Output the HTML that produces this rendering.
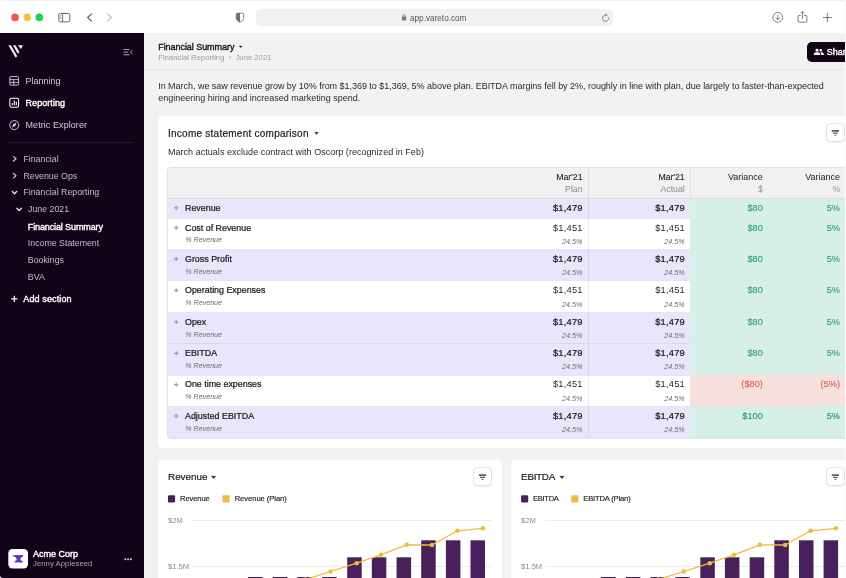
<!DOCTYPE html>
<html>
<head>
<meta charset="utf-8">
<title>Financial Summary</title>
<style>
*{box-sizing:border-box;margin:0;padding:0}
html,body{width:846px;height:578px;overflow:hidden;background:#fbfbfb}
body{font-family:"Liberation Sans",sans-serif;position:relative;color:#1c1c1e}
.t{position:absolute;white-space:nowrap;line-height:1}
svg{position:absolute;left:0;top:0;overflow:visible}
#win{position:absolute;left:0;top:0;width:845px;height:578px;overflow:hidden;background:#fff;border-top-left-radius:5px;filter:blur(0.55px)}
#chrome{position:absolute;left:0;top:0;width:845px;height:33px;background:#fff;border-top:1px solid #efeff1}
#url{position:absolute;left:255.5px;top:8.8px;width:357px;height:17.3px;border-radius:4.5px;background:#f1f1f1}
#side{position:absolute;left:0;top:33.3px;width:144px;height:544.7px;background:#110418;border-bottom-left-radius:3px}
#main{position:absolute;left:144px;top:33.3px;width:701px;height:544.7px;background:#f2f2f2}
#hdrline{position:absolute;left:144px;top:69px;width:701px;height:1px;background:#e4e4e4}
.card{position:absolute;background:#fff;border-radius:5px}
.fbtn{position:absolute;width:18.4px;height:19px;border:1px solid #e2e2e2;border-radius:4.5px;background:#fff;box-shadow:0 0.5px 1px rgba(0,0,0,.06)}
.band{position:absolute}
</style>
</head>
<body>
<div id="win">
<div id="chrome"></div>
<div id="url"></div>
<div id="side"></div>
<div id="main"></div>
<div id="hdrline"></div>

<svg width="846" height="34" viewBox="0 0 846 34">
<circle cx="15" cy="17.4" r="3.8" fill="#f65353"/>
<circle cx="27.3" cy="17.4" r="3.8" fill="#f4c53a"/>
<circle cx="39.3" cy="17.4" r="3.8" fill="#1fd449"/>
<rect x="58.8" y="13.4" width="11" height="8.4" rx="1.5" fill="none" stroke="#636363" stroke-width="1"/>
<path d="M62.6 13.4V21.8" stroke="#636363" stroke-width="0.95"/>
<path d="M60.1 15.6h1.3M60.1 17h1.3M60.1 18.4h1.3" stroke="#6b6b6b" stroke-width="0.6"/>
<path d="M91.6 13.9L87.6 17.5L91.6 21.1" fill="none" stroke="#5a5a5a" stroke-width="1.1" stroke-linecap="round" stroke-linejoin="round"/>
<path d="M107.4 13.9L111.4 17.5L107.4 21.1" fill="none" stroke="#bdbdbd" stroke-width="1.1" stroke-linecap="round" stroke-linejoin="round"/>
<path d="M236.3 13.7Q240 12.2 243.7 13.7V18.3Q243.7 20.7 240 22.3Q236.3 20.7 236.3 18.3Z" fill="none" stroke="#777" stroke-width="0.85" stroke-linejoin="round"/>
<path d="M240 12.9V22.3Q236.3 20.7 236.3 18.3V13.7Q238 13 240 12.9Z" fill="#6f6f6f"/>
<rect x="401.9" y="16.6" width="4.4" height="3.9" rx="0.7" fill="#7a7a7a"/>
<path d="M402.9 16.8V15.7a1.2 1.2 0 0 1 2.4 0V16.8" fill="none" stroke="#7a7a7a" stroke-width="0.8"/>
<path d="M608.75 17.5A3.2 3.2 0 1 1 605.6 15.0" fill="none" stroke="#707070" stroke-width="0.8" stroke-linecap="round"/>
<path d="M605.5 13.5L607.5 15.0L605.5 16.4Z" fill="#707070"/>
<circle cx="777.8" cy="17.3" r="4.9" fill="none" stroke="#6b6b6b" stroke-width="0.85"/>
<path d="M777.8 14.8V19.6M775.9 17.9L777.8 19.7L779.7 17.9" fill="none" stroke="#6b6b6b" stroke-width="0.85" stroke-linecap="round" stroke-linejoin="round"/>
<path d="M800.6 15.4H798.9a0.8 0.8 0 0 0-.8.8V21.4a0.8 0.8 0 0 0 .8.8H806.1a0.8 0.8 0 0 0 .8-.8V16.2a0.8 0.8 0 0 0-.8-.8H804.4" fill="none" stroke="#6b6b6b" stroke-width="0.85" stroke-linecap="round"/>
<path d="M802.5 18.6V11.4M800.7 13.1L802.5 11.3L804.3 13.1" fill="none" stroke="#6b6b6b" stroke-width="0.85" stroke-linecap="round" stroke-linejoin="round"/>
<path d="M823.2 17.5H831.6M827.4 13.3V21.7" stroke="#6b6b6b" stroke-width="0.9" stroke-linecap="round"/>
</svg>
<div class="t" style="top:15px;font-size:8.2px;left:410.00px;color:#555;">app.vareto.com</div>
<svg width="144" height="578" viewBox="0 0 144 578">
<polygon points="8.3,45.3 10.9,45.3 17.2,56.2 15.7,57.8" fill="#f4f2f5"/>
<polygon points="12.9,45.3 15.5,45.3 19.3,51.9 18.0,54.0" fill="#f4f2f5"/>
<polygon points="17.7,45.3 22.9,45.3 21.0,49.1" fill="#f4f2f5"/>
<path d="M123.5 49.6H129.6M123.5 52.2H128.2M123.5 54.8H129.6" stroke="#cfc9d3" stroke-width="0.8"/>
<path d="M132.6 50.3L130.5 52.2L132.6 54.1" fill="none" stroke="#cfc9d3" stroke-width="0.8"/>
<rect x="9.8" y="76.6" width="8.8" height="8.5" rx="1.2" fill="none" stroke="#d3ced7" stroke-width="0.95"/>
<path d="M9.8 79.6H18.6M9.8 82.4H18.6M13.7 79.6V85.1" stroke="#d3ced7" stroke-width="0.85"/>
<rect x="9.8" y="98.3" width="8.8" height="8.9" rx="1.6" fill="none" stroke="#fff" stroke-width="1.05"/>
<path d="M12.3 105.3V103M14.3 105.3V100.5M16.3 105.3V101.7" stroke="#fff" stroke-width="1.1"/>
<circle cx="14.3" cy="125.1" r="4.5" fill="none" stroke="#d3ced7" stroke-width="0.95"/>
<polygon points="16.6,122.8 15.3,126.1 12.0,127.4 13.3,124.1" fill="#d3ced7"/>
<rect x="8.3" y="142" width="125.7" height="0.8" fill="#2c2033"/>
<path d="M13.5 156.60000000000002L16.0 158.8L13.5 161.0" fill="none" stroke="#d3ced7" stroke-width="1.2" stroke-linecap="round" stroke-linejoin="round"/>
<path d="M13.5 173.5L16.0 175.7L13.5 177.89999999999998" fill="none" stroke="#d3ced7" stroke-width="1.2" stroke-linecap="round" stroke-linejoin="round"/>
<path d="M12.2 191.4L14.5 193.79999999999998L16.8 191.4" fill="none" stroke="#f0eef2" stroke-width="1.3" stroke-linecap="round" stroke-linejoin="round"/>
<path d="M16.9 208.20000000000002L19.2 210.6L21.5 208.20000000000002" fill="none" stroke="#f0eef2" stroke-width="1.3" stroke-linecap="round" stroke-linejoin="round"/>
<path d="M11.2 298.9H17.4M14.3 295.8V302" stroke="#fff" stroke-width="1.25"/>
<rect x="8.3" y="549" width="19.7" height="19.5" rx="4.2" fill="#fff"/>
<path d="M12.7 555.2H15.2V555H23.2V556.6C21.6 556.9 20.6 557.9 20.4 559.2C20.6 560.2 21.6 560.9 22.6 561V562.4H14.6V561C15.7 560.8 16.6 560.2 16.7 559.2C16.4 557.7 14.6 556.5 12.7 556.3Z" fill="#5a3db8"/>
<circle cx="125.3" cy="559.2" r="0.95" fill="#e2dee5"/>
<circle cx="128.1" cy="559.2" r="0.95" fill="#e2dee5"/>
<circle cx="130.9" cy="559.2" r="0.95" fill="#e2dee5"/>
</svg>
<div class="t" style="top:77px;font-size:9px;left:25.50px;color:#d3ced7;">Planning</div>
<div class="t" style="top:99px;font-size:9px;left:25.50px;color:#fff;letter-spacing:0.07px;-webkit-text-stroke:0.36px;">Reporting</div>
<div class="t" style="top:121px;font-size:9px;left:25.50px;color:#d3ced7;letter-spacing:0.07px;">Metric Explorer</div>
<div class="t" style="top:155px;font-size:8.8px;left:23.40px;color:#c2bdc7;">Financial</div>
<div class="t" style="top:172px;font-size:8.8px;left:23.40px;color:#c2bdc7;">Revenue Ops</div>
<div class="t" style="top:188px;font-size:8.8px;left:23.40px;color:#c2bdc7;">Financial Reporting</div>
<div class="t" style="top:205px;font-size:8.8px;left:28.00px;color:#c2bdc7;">June 2021</div>
<div class="t" style="top:223px;font-size:9px;left:27.80px;color:#fff;letter-spacing:-0.12px;-webkit-text-stroke:0.36px;">Financial Summary</div>
<div class="t" style="top:239px;font-size:8.8px;left:27.80px;color:#c2bdc7;">Income Statement</div>
<div class="t" style="top:256px;font-size:8.8px;left:27.80px;color:#c2bdc7;">Bookings</div>
<div class="t" style="top:273px;font-size:8.8px;left:27.80px;color:#c2bdc7;">BVA</div>
<div class="t" style="top:295px;font-size:9px;left:23.30px;color:#fff;letter-spacing:0.12px;-webkit-text-stroke:0.36px;">Add section</div>
<div class="t" style="top:550px;font-size:9px;left:33.00px;color:#fff;-webkit-text-stroke:0.36px;">Acme Corp</div>
<div class="t" style="top:560px;font-size:7.8px;left:33.00px;color:#a9a2ae;">Jenny Appleseed</div>
<div class="t" style="top:43px;font-size:9px;left:158.20px;color:#141416;letter-spacing:-0.05px;-webkit-text-stroke:0.36px;">Financial Summary</div>
<svg width="846" height="100"><path d="M239 45.9h3.2l-1.6 1.8z" fill="#222" stroke="#222" stroke-width="0.3" stroke-linejoin="round"/></svg>
<div class="t" style="top:54px;font-size:7.7px;left:158.20px;color:#9a9a9a;">Financial Reporting&nbsp; ›&nbsp; June 2021</div>
<div style="position:absolute;left:807.1px;top:42px;width:50px;height:19.6px;border-radius:4.8px;background:#0f0514"></div>
<svg width="846" height="100"><circle cx="817" cy="50.3" r="1.45" fill="#fff"/><path d="M813.9 54.9V53.9C813.9 52.7 815.4 52.3 817 52.3S820.1 52.7 820.1 53.9V54.9Z" fill="#fff"/><circle cx="820.8" cy="50.3" r="1.3" fill="#fff"/><path d="M820.9 52.3C822.4 52.3 823.8 52.8 823.8 53.9V54.9H821V53.8C821 53.2 820.7 52.7 820.3 52.4Z" fill="#fff"/></svg>
<div class="t" style="top:48px;font-size:9px;left:826.70px;color:#fff;-webkit-text-stroke:0.36px;">Share</div>
<div class="t" style="top:82px;font-size:9px;left:158.20px;color:#2a2a2c;letter-spacing:-0.029px;">In March, we saw revenue grow by 10% from $1,369 to $1,369, 5% above plan. EBITDA margins fell by 2%, roughly in line with plan, due largely to faster-than-expected</div>
<div class="t" style="top:94px;font-size:9px;left:158.20px;color:#2a2a2c;">engineering hiring and increased marketing spend.</div>
<div class="card" style="left:158.2px;top:115.8px;width:700px;height:332.3px"></div>
<div class="t" style="top:129px;font-size:10px;left:168.00px;color:#1a1a1c;letter-spacing:0.25px;-webkit-text-stroke:0.2px #1a1a1c;">Income statement comparison</div>
<svg width="846" height="200"><path d="M314.6 132.3h3.8l-1.9 2.1z" fill="#222" stroke="#222" stroke-width="0.3" stroke-linejoin="round"/></svg>
<div class="t" style="top:148px;font-size:9px;left:168.00px;color:#2a2a2c;letter-spacing:0.03px;">March actuals exclude contract with Oscorp (recognized in Feb)</div>
<div class="fbtn" style="left:826.2px;top:123.4px"></div>

<div style="position:absolute;left:167.3px;top:166.8px;width:700px;height:272.00px;border:1px solid #e2e2e4;border-radius:3.5px;overflow:hidden;background:#fff">
<div class="band" style="left:-1.00px;top:-1.00px;width:732.70px;height:31.40px;background:#f1f1f1"></div>
<div class="band" style="left:-1.00px;top:30.40px;width:522.70px;height:19.80px;background:#e9e6fb"></div>
<div class="band" style="left:521.70px;top:30.40px;width:210.00px;height:19.80px;background:#d6efe7"></div>
<div class="band" style="left:521.70px;top:50.20px;width:210.00px;height:31.30px;background:#d6efe7"></div>
<div class="band" style="left:-1.00px;top:81.50px;width:522.70px;height:31.50px;background:#e9e6fb"></div>
<div class="band" style="left:521.70px;top:81.50px;width:210.00px;height:31.50px;background:#d6efe7"></div>
<div class="band" style="left:521.70px;top:113.00px;width:210.00px;height:31.50px;background:#d6efe7"></div>
<div class="band" style="left:-1.00px;top:144.50px;width:522.70px;height:31.30px;background:#e9e6fb"></div>
<div class="band" style="left:521.70px;top:144.50px;width:210.00px;height:31.30px;background:#d6efe7"></div>
<div class="band" style="left:-1.00px;top:175.80px;width:522.70px;height:31.40px;background:#e9e6fb"></div>
<div class="band" style="left:521.70px;top:175.80px;width:210.00px;height:31.40px;background:#d6efe7"></div>
<div class="band" style="left:521.70px;top:207.20px;width:210.00px;height:31.30px;background:#f8e0dd"></div>
<div class="band" style="left:-1.00px;top:238.50px;width:522.70px;height:32.10px;background:#e9e6fb"></div>
<div class="band" style="left:521.70px;top:238.50px;width:210.00px;height:32.10px;background:#d6efe7"></div>
<div class="band" style="left:-1.00px;top:30.00px;width:732.70px;height:0.80px;background:#dedee0"></div>
<div class="band" style="left:-1.00px;top:49.85px;width:522.70px;height:0.70px;background:#e6e3f3"></div>
<div class="band" style="left:-1.00px;top:81.15px;width:522.70px;height:0.70px;background:#e6e3f3"></div>
<div class="band" style="left:-1.00px;top:112.65px;width:522.70px;height:0.70px;background:#e6e3f3"></div>
<div class="band" style="left:-1.00px;top:144.15px;width:522.70px;height:0.70px;background:#e6e3f3"></div>
<div class="band" style="left:-1.00px;top:175.45px;width:522.70px;height:0.70px;background:#dad6ee"></div>
<div class="band" style="left:-1.00px;top:206.85px;width:522.70px;height:0.70px;background:#e6e3f3"></div>
<div class="band" style="left:-1.00px;top:238.15px;width:522.70px;height:0.70px;background:#e6e3f3"></div>
<div class="band" style="left:419.70px;top:-1.00px;width:0.80px;height:271.60px;background:rgba(110,110,140,0.12)"></div>
<div class="band" style="left:521.30px;top:-1.00px;width:0.80px;height:31.40px;background:rgba(110,110,140,0.12)"></div>
</div>
<div class="t" style="top:173px;font-size:8.7px;right:262.50px;color:#1c1c1e;-webkit-text-stroke:0.08px #1c1c1e;">Mar'21</div>
<div class="t" style="top:185px;font-size:8.7px;right:262.50px;color:#8c8c8e;">Plan</div>
<div class="t" style="top:173px;font-size:8.7px;right:160.30px;color:#1c1c1e;-webkit-text-stroke:0.08px #1c1c1e;">Mar'21</div>
<div class="t" style="top:185px;font-size:8.7px;right:160.30px;color:#8c8c8e;">Actual</div>
<div class="t" style="top:173px;font-size:9px;right:82.20px;color:#1c1c1e;">Variance</div>
<div class="t" style="top:185px;font-size:8.5px;right:82.20px;color:#8c8c8e;">$</div>
<div class="t" style="top:173px;font-size:9px;right:5.00px;color:#1c1c1e;">Variance</div>
<div class="t" style="top:185px;font-size:8.5px;right:5.00px;color:#8c8c8e;">%</div>
<svg width="846" height="578">
<path d="M174.0 207.89999999999998h4.4M176.2 205.7v4.4" stroke="#85858c" stroke-width="0.9"/>
<path d="M174.0 227.7h4.4M176.2 225.5v4.4" stroke="#85858c" stroke-width="0.9"/>
<path d="M174.0 259.0h4.4M176.2 256.8v4.4" stroke="#85858c" stroke-width="0.9"/>
<path d="M174.0 290.5h4.4M176.2 288.3v4.4" stroke="#85858c" stroke-width="0.9"/>
<path d="M174.0 322.0h4.4M176.2 319.8v4.4" stroke="#85858c" stroke-width="0.9"/>
<path d="M174.0 353.3h4.4M176.2 351.1v4.4" stroke="#85858c" stroke-width="0.9"/>
<path d="M174.0 384.7h4.4M176.2 382.5v4.4" stroke="#85858c" stroke-width="0.9"/>
<path d="M174.0 416.0h4.4M176.2 413.8v4.4" stroke="#85858c" stroke-width="0.9"/>
</svg>
<div class="t" style="top:204px;font-size:8.9px;left:185.00px;color:#1a1a1c;letter-spacing:0.0px;-webkit-text-stroke:0.24px #1a1a1c;">Revenue</div>
<div class="t" style="top:204px;font-size:9.3px;right:262.28px;color:#1a1a1c;letter-spacing:0.22px;-webkit-text-stroke:0.24px;">$1,479</div>
<div class="t" style="top:204px;font-size:9.3px;right:160.08px;color:#1a1a1c;letter-spacing:0.22px;-webkit-text-stroke:0.24px;">$1,479</div>
<div class="t" style="top:204px;font-size:9.2px;right:82.20px;color:#2f9e78;font-weight:400;-webkit-text-stroke:0.1px #2f9e78;">$80</div>
<div class="t" style="top:204px;font-size:9.2px;right:5.00px;color:#2f9e78;font-weight:400;-webkit-text-stroke:0.1px #2f9e78;">5%</div>
<div class="t" style="top:224px;font-size:8.9px;left:185.00px;color:#1a1a1c;letter-spacing:0.0px;-webkit-text-stroke:0.24px #1a1a1c;">Cost of Revenue</div>
<div class="t" style="top:224px;font-size:9.3px;right:262.28px;color:#2a2a2c;letter-spacing:0.22px;">$1,451</div>
<div class="t" style="top:224px;font-size:9.3px;right:160.08px;color:#2a2a2c;letter-spacing:0.22px;">$1,451</div>
<div class="t" style="top:237px;font-size:7.1px;left:185.30px;color:#6a6a6e;font-style:italic;">% Revenue</div>
<div class="t" style="top:238px;font-size:7.2px;right:262.50px;color:#6a6a6e;font-style:italic;">24.5%</div>
<div class="t" style="top:238px;font-size:7.2px;right:160.30px;color:#6a6a6e;font-style:italic;">24.5%</div>
<div class="t" style="top:224px;font-size:9.2px;right:82.20px;color:#2f9e78;font-weight:400;-webkit-text-stroke:0.1px #2f9e78;">$80</div>
<div class="t" style="top:224px;font-size:9.2px;right:5.00px;color:#2f9e78;font-weight:400;-webkit-text-stroke:0.1px #2f9e78;">5%</div>
<div class="t" style="top:255px;font-size:8.9px;left:185.00px;color:#1a1a1c;letter-spacing:0.0px;-webkit-text-stroke:0.24px #1a1a1c;">Gross Profit</div>
<div class="t" style="top:255px;font-size:9.3px;right:262.28px;color:#1a1a1c;letter-spacing:0.22px;-webkit-text-stroke:0.24px;">$1,479</div>
<div class="t" style="top:255px;font-size:9.3px;right:160.08px;color:#1a1a1c;letter-spacing:0.22px;-webkit-text-stroke:0.24px;">$1,479</div>
<div class="t" style="top:269px;font-size:7.1px;left:185.30px;color:#6a6a6e;font-style:italic;">% Revenue</div>
<div class="t" style="top:269px;font-size:7.2px;right:262.50px;color:#6a6a6e;font-style:italic;">24.5%</div>
<div class="t" style="top:269px;font-size:7.2px;right:160.30px;color:#6a6a6e;font-style:italic;">24.5%</div>
<div class="t" style="top:255px;font-size:9.2px;right:82.20px;color:#2f9e78;font-weight:400;-webkit-text-stroke:0.1px #2f9e78;">$80</div>
<div class="t" style="top:255px;font-size:9.2px;right:5.00px;color:#2f9e78;font-weight:400;-webkit-text-stroke:0.1px #2f9e78;">5%</div>
<div class="t" style="top:286px;font-size:8.9px;left:185.00px;color:#1a1a1c;letter-spacing:0.0px;-webkit-text-stroke:0.24px #1a1a1c;">Operating Expenses</div>
<div class="t" style="top:286px;font-size:9.3px;right:262.28px;color:#2a2a2c;letter-spacing:0.22px;">$1,451</div>
<div class="t" style="top:286px;font-size:9.3px;right:160.08px;color:#2a2a2c;letter-spacing:0.22px;">$1,451</div>
<div class="t" style="top:300px;font-size:7.1px;left:185.30px;color:#6a6a6e;font-style:italic;">% Revenue</div>
<div class="t" style="top:301px;font-size:7.2px;right:262.50px;color:#6a6a6e;font-style:italic;">24.5%</div>
<div class="t" style="top:301px;font-size:7.2px;right:160.30px;color:#6a6a6e;font-style:italic;">24.5%</div>
<div class="t" style="top:286px;font-size:9.2px;right:82.20px;color:#2f9e78;font-weight:400;-webkit-text-stroke:0.1px #2f9e78;">$80</div>
<div class="t" style="top:286px;font-size:9.2px;right:5.00px;color:#2f9e78;font-weight:400;-webkit-text-stroke:0.1px #2f9e78;">5%</div>
<div class="t" style="top:318px;font-size:8.9px;left:185.00px;color:#1a1a1c;letter-spacing:0.0px;-webkit-text-stroke:0.24px #1a1a1c;">Opex</div>
<div class="t" style="top:318px;font-size:9.3px;right:262.28px;color:#1a1a1c;letter-spacing:0.22px;-webkit-text-stroke:0.24px;">$1,479</div>
<div class="t" style="top:318px;font-size:9.3px;right:160.08px;color:#1a1a1c;letter-spacing:0.22px;-webkit-text-stroke:0.24px;">$1,479</div>
<div class="t" style="top:332px;font-size:7.1px;left:185.30px;color:#6a6a6e;font-style:italic;">% Revenue</div>
<div class="t" style="top:332px;font-size:7.2px;right:262.50px;color:#6a6a6e;font-style:italic;">24.5%</div>
<div class="t" style="top:332px;font-size:7.2px;right:160.30px;color:#6a6a6e;font-style:italic;">24.5%</div>
<div class="t" style="top:318px;font-size:9.2px;right:82.20px;color:#2f9e78;font-weight:400;-webkit-text-stroke:0.1px #2f9e78;">$80</div>
<div class="t" style="top:318px;font-size:9.2px;right:5.00px;color:#2f9e78;font-weight:400;-webkit-text-stroke:0.1px #2f9e78;">5%</div>
<div class="t" style="top:349px;font-size:8.9px;left:185.00px;color:#1a1a1c;letter-spacing:0.0px;-webkit-text-stroke:0.24px #1a1a1c;">EBITDA</div>
<div class="t" style="top:349px;font-size:9.3px;right:262.28px;color:#1a1a1c;letter-spacing:0.22px;-webkit-text-stroke:0.24px;">$1,479</div>
<div class="t" style="top:349px;font-size:9.3px;right:160.08px;color:#1a1a1c;letter-spacing:0.22px;-webkit-text-stroke:0.24px;">$1,479</div>
<div class="t" style="top:363px;font-size:7.1px;left:185.30px;color:#6a6a6e;font-style:italic;">% Revenue</div>
<div class="t" style="top:363px;font-size:7.2px;right:262.50px;color:#6a6a6e;font-style:italic;">24.5%</div>
<div class="t" style="top:363px;font-size:7.2px;right:160.30px;color:#6a6a6e;font-style:italic;">24.5%</div>
<div class="t" style="top:349px;font-size:9.2px;right:82.20px;color:#2f9e78;font-weight:400;-webkit-text-stroke:0.1px #2f9e78;">$80</div>
<div class="t" style="top:349px;font-size:9.2px;right:5.00px;color:#2f9e78;font-weight:400;-webkit-text-stroke:0.1px #2f9e78;">5%</div>
<div class="t" style="top:380px;font-size:8.9px;left:185.00px;color:#1a1a1c;letter-spacing:0.0px;-webkit-text-stroke:0.24px #1a1a1c;">One time expenses</div>
<div class="t" style="top:380px;font-size:9.3px;right:262.28px;color:#2a2a2c;letter-spacing:0.22px;">$1,451</div>
<div class="t" style="top:380px;font-size:9.3px;right:160.08px;color:#2a2a2c;letter-spacing:0.22px;">$1,451</div>
<div class="t" style="top:394px;font-size:7.1px;left:185.30px;color:#6a6a6e;font-style:italic;">% Revenue</div>
<div class="t" style="top:395px;font-size:7.2px;right:262.50px;color:#6a6a6e;font-style:italic;">24.5%</div>
<div class="t" style="top:395px;font-size:7.2px;right:160.30px;color:#6a6a6e;font-style:italic;">24.5%</div>
<div class="t" style="top:380px;font-size:9.2px;right:82.20px;color:#d9604c;font-weight:400;-webkit-text-stroke:0.1px #d9604c;">($80)</div>
<div class="t" style="top:380px;font-size:9.2px;right:5.00px;color:#d9604c;font-weight:400;-webkit-text-stroke:0.1px #d9604c;">(5%)</div>
<div class="t" style="top:412px;font-size:8.9px;left:185.00px;color:#1a1a1c;letter-spacing:0.0px;-webkit-text-stroke:0.24px #1a1a1c;">Adjusted EBITDA</div>
<div class="t" style="top:412px;font-size:9.3px;right:262.28px;color:#1a1a1c;letter-spacing:0.22px;-webkit-text-stroke:0.24px;">$1,479</div>
<div class="t" style="top:412px;font-size:9.3px;right:160.08px;color:#1a1a1c;letter-spacing:0.22px;-webkit-text-stroke:0.24px;">$1,479</div>
<div class="t" style="top:426px;font-size:7.1px;left:185.30px;color:#6a6a6e;font-style:italic;">% Revenue</div>
<div class="t" style="top:426px;font-size:7.2px;right:262.50px;color:#6a6a6e;font-style:italic;">24.5%</div>
<div class="t" style="top:426px;font-size:7.2px;right:160.30px;color:#6a6a6e;font-style:italic;">24.5%</div>
<div class="t" style="top:412px;font-size:9.2px;right:82.20px;color:#2f9e78;font-weight:400;-webkit-text-stroke:0.2px;">$100</div>
<div class="t" style="top:412px;font-size:9.2px;right:5.00px;color:#2f9e78;font-weight:400;-webkit-text-stroke:0.2px;">5%</div>
<div class="card" style="left:158.10px;top:460px;width:343.6px;height:140px"></div>
<div class="t" style="top:472px;font-size:9.9px;left:168.00px;color:#1a1a1c;letter-spacing:0px;-webkit-text-stroke:0.2px #1a1a1c;">Revenue</div>
<div class="t" style="top:495px;font-size:7.6px;left:180.00px;color:#1c1c1e;letter-spacing:-0.1px;-webkit-text-stroke:0.15px #1c1c1e;">Revenue</div>
<div class="t" style="top:495px;font-size:7.6px;left:234.70px;color:#1c1c1e;letter-spacing:-0.05px;-webkit-text-stroke:0.15px #1c1c1e;">Revenue (Plan)</div>
<div class="t" style="top:517px;font-size:7.6px;left:168.00px;color:#8a8a8c;">$2M</div>
<div class="t" style="top:563px;font-size:7.6px;left:168.00px;color:#8a8a8c;">$1.5M</div>
<svg width="846" height="578" viewBox="0 0 846 578">
<path d="M211.3 476.2h4.4l-2.2 2.4z" fill="#222" stroke="#222" stroke-width="0.4" stroke-linejoin="round"/>
<rect x="168.00" y="495.2" width="7.1" height="7.3" rx="1.2" fill="#48215c"/>
<rect x="222.50" y="495.2" width="7.1" height="7.3" rx="1.2" fill="#eebb3d"/>
<rect x="192.20" y="520.2" width="299.80" height="0.8" fill="#e6e6e8"/>
<rect x="192.20" y="566.0" width="299.80" height="0.8" fill="#e6e6e8"/>
<rect x="248.00" y="577" width="14.5" height="23" fill="#48215c"/>
<rect x="272.80" y="577" width="14.5" height="23" fill="#48215c"/>
<rect x="297.40" y="577" width="14.5" height="23" fill="#48215c"/>
<rect x="322.20" y="577" width="14.5" height="23" fill="#48215c"/>
<rect x="347.20" y="557.3" width="14.5" height="42.700000000000045" fill="#48215c"/>
<rect x="371.80" y="557.3" width="14.5" height="42.700000000000045" fill="#48215c"/>
<rect x="396.60" y="557.3" width="14.5" height="42.700000000000045" fill="#48215c"/>
<rect x="421.20" y="540.3" width="14.5" height="59.700000000000045" fill="#48215c"/>
<rect x="445.90" y="540.3" width="14.5" height="59.700000000000045" fill="#48215c"/>
<rect x="470.50" y="540.3" width="14.5" height="59.700000000000045" fill="#48215c"/>
<polyline fill="none" stroke="#eebb3d" stroke-width="1.3" stroke-linejoin="round" points="254.50,592 279.80,588 305.10,579.6 330.50,571.5 356.70,563.2 380.80,554.8 406.70,544.8 432.00,545 457.50,530.8 482.80,528.3"/>
<circle cx="254.50" cy="592" r="2.3" fill="#eebb3d"/>
<circle cx="279.80" cy="588" r="2.3" fill="#eebb3d"/>
<circle cx="305.10" cy="579.6" r="2.3" fill="#eebb3d"/>
<circle cx="330.50" cy="571.5" r="2.3" fill="#eebb3d"/>
<circle cx="356.70" cy="563.2" r="2.3" fill="#eebb3d"/>
<circle cx="380.80" cy="554.8" r="2.3" fill="#eebb3d"/>
<circle cx="406.70" cy="544.8" r="2.3" fill="#eebb3d"/>
<circle cx="432.00" cy="545" r="2.3" fill="#eebb3d"/>
<circle cx="457.50" cy="530.8" r="2.3" fill="#eebb3d"/>
<circle cx="482.80" cy="528.3" r="2.3" fill="#eebb3d"/>
</svg>
<div class="card" style="left:511.20px;top:460px;width:400px;height:140px"></div>
<div class="t" style="top:472px;font-size:9.9px;left:521.10px;color:#1a1a1c;letter-spacing:-0.3px;-webkit-text-stroke:0.2px #1a1a1c;">EBITDA</div>
<div class="t" style="top:495px;font-size:7.6px;left:533.10px;color:#1c1c1e;letter-spacing:-0.33px;-webkit-text-stroke:0.15px #1c1c1e;">EBITDA</div>
<div class="t" style="top:495px;font-size:7.6px;left:583.30px;color:#1c1c1e;letter-spacing:-0.165px;-webkit-text-stroke:0.15px #1c1c1e;">EBITDA (Plan)</div>
<div class="t" style="top:517px;font-size:7.6px;left:521.10px;color:#8a8a8c;">$2M</div>
<div class="t" style="top:563px;font-size:7.6px;left:521.10px;color:#8a8a8c;">$1.5M</div>
<svg width="846" height="578" viewBox="0 0 846 578">
<path d="M559.8 476.2h4.4l-2.2 2.4z" fill="#222" stroke="#222" stroke-width="0.4" stroke-linejoin="round"/>
<rect x="521.10" y="495.2" width="7.1" height="7.3" rx="1.2" fill="#48215c"/>
<rect x="571.30" y="495.2" width="7.1" height="7.3" rx="1.2" fill="#eebb3d"/>
<rect x="545.30" y="520.2" width="354.70" height="0.8" fill="#e6e6e8"/>
<rect x="545.30" y="566.0" width="354.70" height="0.8" fill="#e6e6e8"/>
<rect x="601.10" y="577" width="14.5" height="23" fill="#48215c"/>
<rect x="625.90" y="577" width="14.5" height="23" fill="#48215c"/>
<rect x="650.50" y="577" width="14.5" height="23" fill="#48215c"/>
<rect x="675.30" y="577" width="14.5" height="23" fill="#48215c"/>
<rect x="700.30" y="557.3" width="14.5" height="42.700000000000045" fill="#48215c"/>
<rect x="724.90" y="557.3" width="14.5" height="42.700000000000045" fill="#48215c"/>
<rect x="749.70" y="557.3" width="14.5" height="42.700000000000045" fill="#48215c"/>
<rect x="774.30" y="540.3" width="14.5" height="59.700000000000045" fill="#48215c"/>
<rect x="799.00" y="540.3" width="14.5" height="59.700000000000045" fill="#48215c"/>
<rect x="823.60" y="540.3" width="14.5" height="59.700000000000045" fill="#48215c"/>
<polyline fill="none" stroke="#eebb3d" stroke-width="1.3" stroke-linejoin="round" points="607.60,592 632.90,588 658.20,579.6 683.60,571.5 709.80,563.2 733.90,554.8 759.80,544.8 785.10,545 810.60,530.8 835.90,528.3"/>
<circle cx="607.60" cy="592" r="2.3" fill="#eebb3d"/>
<circle cx="632.90" cy="588" r="2.3" fill="#eebb3d"/>
<circle cx="658.20" cy="579.6" r="2.3" fill="#eebb3d"/>
<circle cx="683.60" cy="571.5" r="2.3" fill="#eebb3d"/>
<circle cx="709.80" cy="563.2" r="2.3" fill="#eebb3d"/>
<circle cx="733.90" cy="554.8" r="2.3" fill="#eebb3d"/>
<circle cx="759.80" cy="544.8" r="2.3" fill="#eebb3d"/>
<circle cx="785.10" cy="545" r="2.3" fill="#eebb3d"/>
<circle cx="810.60" cy="530.8" r="2.3" fill="#eebb3d"/>
<circle cx="835.90" cy="528.3" r="2.3" fill="#eebb3d"/>
</svg>
<div class="fbtn" style="left:473.3px;top:467.4px"></div>
<div class="fbtn" style="left:826.2px;top:467.4px"></div>
<svg width="846" height="578"><rect x="831.70" y="130.00" width="7.4" height="1.7" rx="0.3" fill="#5e5e62"/><rect x="832.90" y="132.45" width="5" height="1.35" rx="0.3" fill="#5e5e62"/><rect x="834.45" y="134.65" width="1.9" height="1.05" rx="0.3" fill="#5e5e62"/><rect x="478.80" y="474.20" width="7.4" height="1.7" rx="0.3" fill="#5e5e62"/><rect x="480.00" y="476.65" width="5" height="1.35" rx="0.3" fill="#5e5e62"/><rect x="481.55" y="478.85" width="1.9" height="1.05" rx="0.3" fill="#5e5e62"/><rect x="831.70" y="474.20" width="7.4" height="1.7" rx="0.3" fill="#5e5e62"/><rect x="832.90" y="476.65" width="5" height="1.35" rx="0.3" fill="#5e5e62"/><rect x="834.45" y="478.85" width="1.9" height="1.05" rx="0.3" fill="#5e5e62"/></svg>
</div>
</body>
</html>
